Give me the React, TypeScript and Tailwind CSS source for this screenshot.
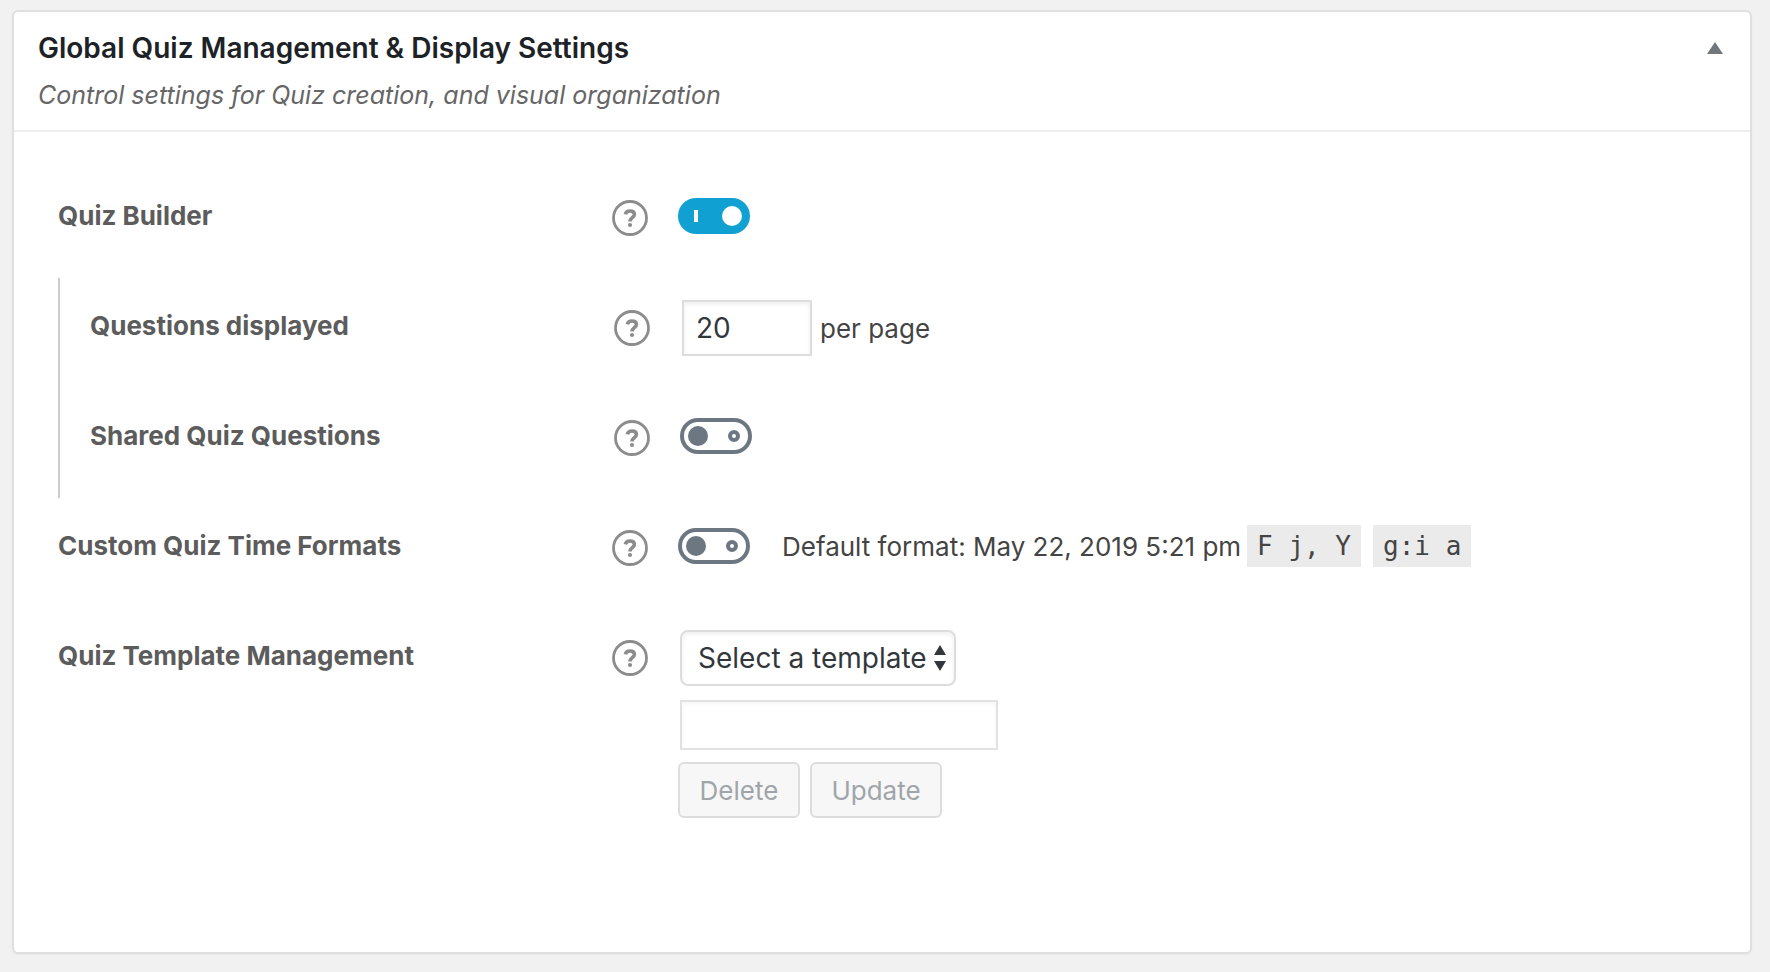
import {useState} from "react";

function HelpButton({topic}: {topic: string}) {
    return (
        <button type="button" aria-label={`Help: ${topic}`} className="mt-2.5 size-9 shrink-0 text-[#8c8c8c]">
            <svg viewBox="0 0 36 36" className="size-9" fill="none" stroke="currentColor">
                <circle cx="18" cy="18" r="16.5" strokeWidth="2.8"/>
                <path d="M13.4 14.4C13.8 12 15.6 11 18 11c2.7 0 4.4 1.4 4.4 3.5 0 3.2-4.4 3.3-4.4 7"
                      strokeWidth="3.6"/>
                <circle cx="18" cy="25" r="2.1" fill="currentColor" stroke="none"/>
            </svg>
        </button>
    )
}

function Toggle({id, defaultChecked = false}: {id: string, defaultChecked?: boolean}) {
    const [on, setOn] = useState(defaultChecked)
    return (
        <span className="relative h-9 w-18 shrink-0">
            <svg viewBox="0 0 72 36" className="h-9 w-18" fill="none">
                {on ? (
                    <>
                        <rect width="72" height="36" rx="18" fill="#11a0d2"/>
                        <rect x="16" y="12" width="4" height="12" fill="#fff"/>
                        <circle cx="54" cy="18" r="10" fill="#fff"/>
                    </>
                ) : (
                    <>
                        <rect x="2" y="2" width="68" height="32" rx="16" stroke="#6c7781" strokeWidth="4"/>
                        <circle cx="18" cy="18" r="10" fill="#6c7781"/>
                        <circle cx="54" cy="18" r="4" stroke="#6c7781" strokeWidth="4"/>
                    </>
                )}
            </svg>
            <input id={id} type="checkbox" role="switch" checked={on} onChange={(e) => setOn(e.target.checked)}
                   className="absolute inset-0 size-full cursor-pointer opacity-0"/>
        </span>
    )
}

function SettingRow({id, label, nested = false, children}) {
    return (
        <div className="flex min-h-[110px] items-start pt-[22px]">
            <label htmlFor={id}
                   className={`${nested ? "w-[524px]" : "w-[554px]"} shrink-0 text-[26px] leading-[52px] font-bold text-[#5c5c5c]`}>
                {label}
            </label>
            <HelpButton topic={label}/>
            <div className="ml-[30px]">{children}</div>
        </div>
    )
}

export default function App() {
    const [open, setOpen] = useState(true)
    return (
        <div className="flex min-h-screen flex-col bg-[#f1f1f1] pt-2.5 pr-[18px] pb-[18px] pl-3 font-['Inter',sans-serif] text-[26px] text-[#444]">
            <section className="flex-1 rounded-md border-2 border-[#dfdfdf] bg-white shadow-[0_1px_2px_rgba(0,0,0,0.04)]">
                <header className="flex items-start justify-between border-b-2 border-[#eee] pt-4 pr-[27px] pb-4 pl-6">
                    <div>
                        <h2 className="text-[28px] leading-10 font-semibold text-[#1d2227]">
                            Global Quiz Management &amp; Display Settings
                        </h2>
                        <p className="mt-2 text-[25px] leading-[38px] text-[#666] italic">
                            Control settings for Quiz creation, and visual organization
                        </p>
                    </div>
                    <button type="button" aria-label="Toggle panel" aria-expanded={open} onClick={() => setOpen(!open)}
                            className="mt-3.5 text-[#72777c]">
                        <svg viewBox="0 0 16 12" className="h-3 w-4" fill="currentColor">
                            <path d="M8 0l8 12H0z"/>
                        </svg>
                    </button>
                </header>

                {open && (
                    <div className="pt-9 pb-8 pl-11">
                        <SettingRow id="builder" label="Quiz Builder">
                            <div className="flex h-[52px] items-center">
                                <Toggle id="builder" defaultChecked/>
                            </div>
                        </SettingRow>

                        <div className="border-l-2 border-[#ccc] pl-[30px]">
                            <SettingRow id="per-page" label="Questions displayed" nested>
                                <div className="ml-0.5 flex items-center gap-2">
                                    <input id="per-page" type="text" defaultValue="20"
                                           className="h-14 w-[130px] border-2 border-[#ddd] px-3 text-[28px] text-[#32373c] shadow-[inset_0_2px_4px_rgba(0,0,0,0.07)]"/>
                                    <span>per page</span>
                                </div>
                            </SettingRow>
                            <SettingRow id="shared" label="Shared Quiz Questions" nested>
                                <div className="flex h-[52px] items-center">
                                    <Toggle id="shared"/>
                                </div>
                            </SettingRow>
                        </div>

                        <SettingRow id="time-formats" label="Custom Quiz Time Formats">
                            <div className="flex h-[52px] items-center">
                                <Toggle id="time-formats"/>
                                <span className="ml-8">Default format: May 22, 2019 5:21 pm</span>
                                <code className="ml-1.5 bg-[#ebebeb] px-2.5 font-['DejaVu_Sans_Mono',monospace] leading-[42px] whitespace-pre">F j, Y</code>
                                <code className="ml-3 bg-[#ebebeb] px-2.5 font-['DejaVu_Sans_Mono',monospace] leading-[42px] whitespace-pre">g:i a</code>
                            </div>
                        </SettingRow>

                        <SettingRow id="template" label="Quiz Template Management">
                            <div className="relative ml-0.5 h-14 w-[276px]">
                                <select id="template"
                                        className="size-full appearance-none rounded-lg border-2 border-[#ddd] bg-white pl-4 text-[28px] text-[#32373c] shadow-[inset_0_2px_4px_rgba(0,0,0,0.07)]">
                                    <option>Select a template</option>
                                </select>
                                <svg viewBox="0 0 12 26" className="pointer-events-none absolute top-[15px] right-2.5 h-[26px] w-3"
                                     fill="#32373c">
                                    <path d="M6 0l6 10H0zM6 26l6-10H0z"/>
                                </svg>
                            </div>
                            <input type="text" aria-label="Template name"
                                   className="mt-3.5 ml-0.5 block h-[50px] w-[318px] border-2 border-[#e2e2e2] px-3 shadow-[inset_0_2px_4px_rgba(0,0,0,0.04)]"/>
                            <div className="mt-3 flex gap-2.5">
                                <button type="button" disabled
                                        className="h-14 w-[122px] rounded-md border-2 border-[#ddd] bg-[#f7f7f7] text-[#a0a5aa]">
                                    Delete
                                </button>
                                <button type="button" disabled
                                        className="h-14 w-[132px] rounded-md border-2 border-[#ddd] bg-[#f7f7f7] text-[#a0a5aa]">
                                    Update
                                </button>
                            </div>
                        </SettingRow>
                    </div>
                )}
            </section>
        </div>
    )
}
